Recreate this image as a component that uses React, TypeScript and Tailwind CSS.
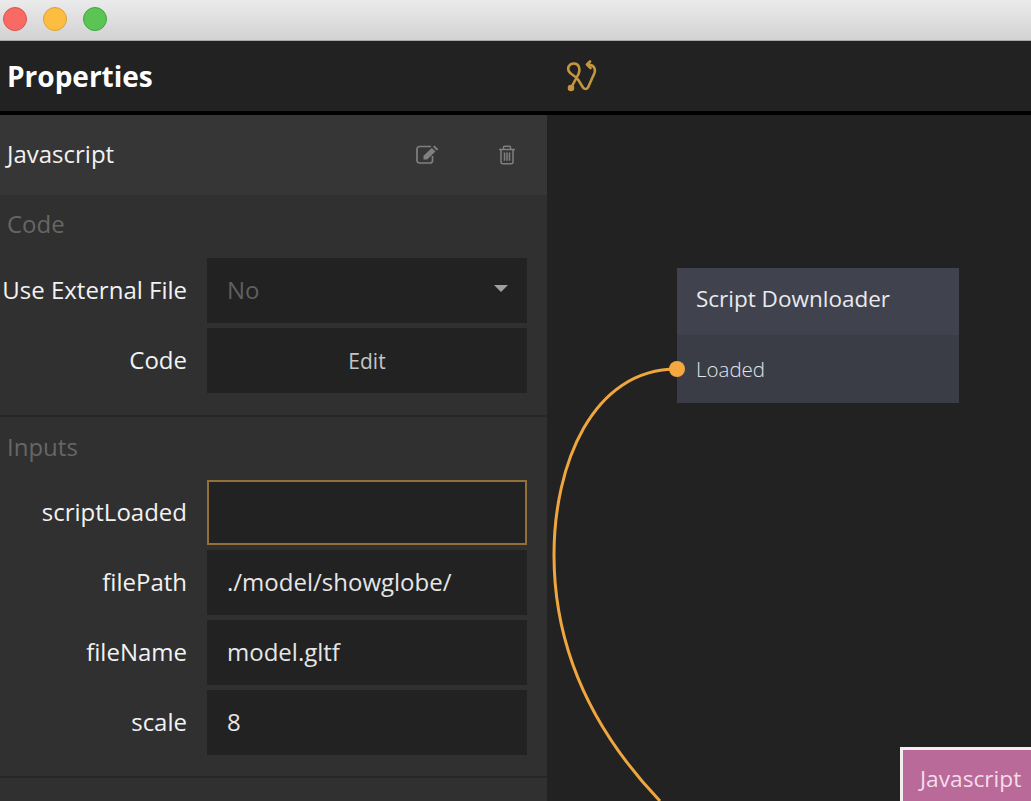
const codeRows = [
  { label: "Use External File", value: "No", kind: "select" },
  { label: "Code", value: "Edit", kind: "button" },
];

const inputRows = [
  { label: "scriptLoaded", value: "", active: true },
  { label: "filePath", value: "./model/showglobe/" },
  { label: "fileName", value: "model.gltf" },
  { label: "scale", value: "8" },
];

function Row({ label, children }: { label: string; children: React.ReactNode }) {
  return (
    <div className="flex h-[65px] items-center">
      <div className="w-[187px] shrink-0 whitespace-nowrap pb-[2px] text-right text-[24px] text-[#f2f2f2]">{label}</div>
      <div className="ml-[20px] h-full w-[320px]">{children}</div>
    </div>
  );
}

function Logo() {
  return (
    <svg width="32" height="32" viewBox="0 0 32 32" fill="none" stroke="#c4973f" strokeWidth="2.6" strokeLinecap="round" strokeLinejoin="round">
      <path d="M6 28 L13.5 14 C15.5 9 14 3.5 9 3.5 C4 3.5 2 8 4 11.5 C6 15 11 16 13 19.5 L18 27.5 C19.5 29.5 21.5 29.5 23 27.5 L29.5 13 C31 8 28 4.5 23 4.5" />
      <path d="M25 1.5 L22 4.5 L25.5 8" />
      <circle cx="6" cy="28" r="2" fill="#c4973f" />
    </svg>
  );
}

function EditIcon() {
  return (
    <svg width="23" height="20" viewBox="0 0 23 20" fill="none" className="mr-[59px] shrink-0">
      <path d="M15 1.5 H3.5 a2.5 2.5 0 0 0 -2.5 2.5 V15.5 a2.5 2.5 0 0 0 2.5 2.5 H14 a2.5 2.5 0 0 0 2.5 -2.5 V11" stroke="#808080" strokeWidth="1.7" />
      <path d="M7.5 14.5 V10.8 L15.8 3 L19.5 6.6 L11.2 14.5 Z" fill="#808080" />
      <path d="M17 1.8 L18.4 0.6 L22.4 4.2 L20.8 5.6 Z" fill="#808080" />
    </svg>
  );
}

function TrashIcon() {
  return (
    <svg width="18" height="20" viewBox="0 0 18 20" fill="none" stroke="#808080" strokeWidth="1.5" className="mr-[31px] shrink-0">
      <path d="M1 4.5 H17" />
      <path d="M5.5 4.5 V2.2 a1 1 0 0 1 1 -1 H11.5 a1 1 0 0 1 1 1 V4.5" />
      <path d="M3 4.5 V17 a1.7 1.7 0 0 0 1.7 1.7 H13.3 a1.7 1.7 0 0 0 1.7 -1.7 V4.5" />
      <path d="M6.5 7.5 V15.7 M9 7.5 V15.7 M11.5 7.5 V15.7" />
    </svg>
  );
}

export default function App() {
  return (
    <div className="flex h-[801px] w-[1031px] flex-col overflow-hidden bg-[#222222] font-['Open_Sans',sans-serif]">
      {/* title bar */}
      <div className="flex h-[41px] shrink-0 items-center gap-[16px] border-b border-[#a8a8a8] bg-gradient-to-b from-[#ebebeb] to-[#d2d2d2] pb-[2px] pl-[3px]">
        <div className="h-[24px] w-[24px] rounded-full border border-[#d9534f] bg-[#f96a64]" />
        <div className="h-[24px] w-[24px] rounded-full border border-[#dba23a] bg-[#fdbd41]" />
        <div className="h-[24px] w-[24px] rounded-full border border-[#3fa544] bg-[#5ac455]" />
      </div>

      {/* top bar */}
      <div className="flex h-[74px] shrink-0 border-b-4 border-black bg-[#222222]">
        <div className="flex w-[547px] shrink-0 items-center pl-[7px] text-[28px] font-bold text-white">Properties</div>
        <div className="flex items-center pl-[18px]">
          <Logo />
        </div>
      </div>

      <div className="flex min-h-0 flex-1">
        {/* properties panel */}
        <div className="w-[547px] shrink-0 bg-[#303030]">
          <div className="flex h-[80px] items-center bg-[#363636] pl-[7px]">
            <span className="flex-1 pb-[2px] text-[24px] text-[#f2f2f2]">Javascript</span>
            <EditIcon />
            <TrashIcon />
          </div>

          <div className="h-[222px] border-b-2 border-[#262626]">
            <div className="flex h-[63px] items-center pb-[5px] pl-[7px] text-[24px] text-[#666666]">Code</div>
            <div className="flex flex-col gap-[5px]">
              {codeRows.map((row) => (
                <Row key={row.label} label={row.label}>
                  {row.kind === "select" ? (
                    <div className="flex h-full items-center justify-between bg-[#222222] pl-[20px] pr-[19px] text-[24px] text-[#5f5f5f]">
                      <span className="pb-[2px]">{row.value}</span>
                      <span className="mb-[4px] h-0 w-0 border-x-[7px] border-t-[7px] border-x-transparent border-t-[#a0a0a0]" />
                    </div>
                  ) : (
                    <div className="flex h-full items-center justify-center bg-[#222222] pt-[2px] text-[21px] text-[#c4c4c4]">{row.value}</div>
                  )}
                </Row>
              ))}
            </div>
          </div>

          <div className="h-[361px] border-b-2 border-[#262626]">
            <div className="flex h-[63px] items-center pb-[4px] pl-[7px] text-[24px] text-[#666666]">Inputs</div>
            <div className="flex flex-col gap-[5px]">
              {inputRows.map((row) => (
                <Row key={row.label} label={row.label}>
                  <div
                    className={
                      row.active
                        ? "flex h-full items-center border-2 border-[#93703a] bg-[#222222] pb-[2px] pl-[20px] text-[24px] text-[#f2f2f2]"
                        : "flex h-full items-center bg-[#222222] pb-[2px] pl-[20px] text-[24px] text-[#e6e6e6]"
                    }
                  >
                    {row.value}
                  </div>
                </Row>
              ))}
            </div>
          </div>
        </div>

        {/* node canvas */}
        <div className="relative flex-1 overflow-hidden bg-[#222222]">
          <svg className="absolute inset-0" width="484" height="686" fill="none">
            <path d="M130 254 C45 254 7 350 7 440 C7 540 50 620 113 686" stroke="#f0a63e" strokeWidth="3" />
          </svg>

          <div className="absolute left-[130px] top-[153px] w-[282px]">
            <div className="flex h-[67px] items-center bg-[#40434d] pb-[5px] pl-[19px] text-[22.5px] text-[#e8eaf0]">Script Downloader</div>
            <div className="flex h-[68px] items-center bg-[#3a3d46] pl-[19px] text-[20.5px] font-light text-[#e2e4ea]">Loaded</div>
            <div className="absolute left-[-8px] top-[93px] h-[16px] w-[16px] rounded-full bg-[#f5a83f]" />
          </div>

          <div className="absolute left-[353px] top-[632px] w-[140px] border-[3px] border-[#f2eef0] bg-[#b96a98] py-[12px] pl-[17px] text-[22.7px] text-[#f5dcea]">
            Javascript
          </div>
        </div>
      </div>
    </div>
  );
}
